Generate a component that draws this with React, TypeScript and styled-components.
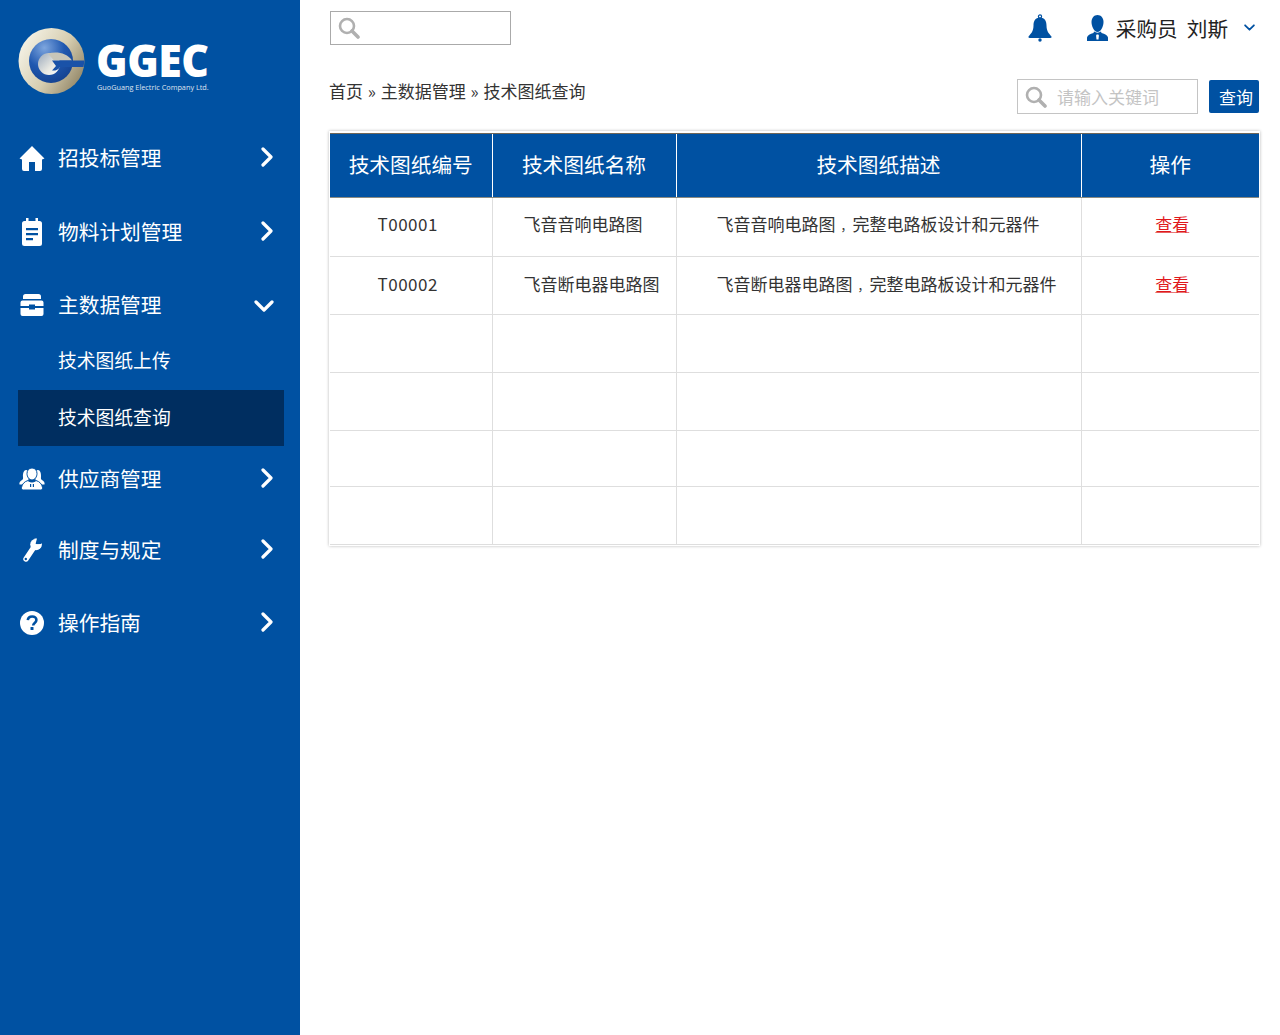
import * as React from 'react';
import styled, { createGlobalStyle } from 'styled-components';

const BLUE = '#0051a2';
const FONT = '"Noto Sans CJK SC", "Noto Sans", sans-serif';

const GlobalStyle = createGlobalStyle`
  html, body { margin: 0; padding: 0; background: #fff; }
  body { font-family: ${FONT}; color: #333; }
  * { box-sizing: border-box; }
`;

const Page = styled.div`
  display: flex;
  width: 1280px;
  height: 1035px;
  overflow: hidden;
`;

const Sidebar = styled.aside`
  width: 300px;
  flex: none;
  background: ${BLUE};
  padding: 27px 16px 0 18px;
`;

const LogoRow = styled.div`
  display: flex;
  height: 68px;
  gap: 11px;
  margin-bottom: 40px;
`;

const LogoWords = styled.div`
  color: #fff;
  padding-top: 16px;
`;

const LogoName = styled.div`
  font-family: "Open Sans", sans-serif;
  font-weight: 800;
  font-size: 45px;
  line-height: 34px;
  height: 34px;
  letter-spacing: -0.5px;
  transform-origin: left top;
  transform: scaleX(0.95);
`;

const LogoSub = styled.div`
  font-family: "Open Sans", sans-serif;
  font-size: 7.3px;
  line-height: 10px;
  margin-top: 5px;
  margin-left: 1px;
  white-space: nowrap;
  opacity: 0.85;
`;

const MenuItem = styled.div<{ $top: number }>`
  display: flex;
  align-items: center;
  height: 46px;
  margin-top: ${p => p.$top}px;
  padding-right: 7px;
  color: #fff;
  font-size: 20.7px;
`;

const MenuIcon = styled.span`
  display: flex;
  justify-content: center;
  width: 28px;
  margin-right: 12px;
`;

const MenuLabel = styled.span`
  flex: 1;
  margin-top: -3px;
  white-space: nowrap;
`;

const SubItem = styled.div<{ $active?: boolean; $top: number }>`
  display: flex;
  align-items: center;
  height: 56px;
  margin-top: ${p => p.$top}px;
  padding: 0 0 4px 40px;
  color: #fff;
  font-size: 18.8px;
  background: ${p => (p.$active ? '#002e60' : 'transparent')};
`;

const Main = styled.main`
  flex: 1;
  padding: 11px 20px 0 29px;
`;

const TopBar = styled.div`
  display: flex;
  align-items: flex-start;
  height: 68px;
`;

const SearchBox = styled.div<{ $width: number; $height: number; $border: string }>`
  display: flex;
  align-items: center;
  gap: 10px;
  width: ${p => p.$width}px;
  height: ${p => p.$height}px;
  margin-left: 1px;
  padding-left: 7px;
  border: 1px solid ${p => p.$border};
  color: #c4c4c4;
  font-size: 17px;
  white-space: nowrap;
`;

const UserArea = styled.div`
  display: flex;
  align-items: center;
  margin-left: auto;
  height: 33px;
  padding-right: 5px;
  color: ${BLUE};
`;

const BellSlot = styled.span`
  display: flex;
  margin-right: 35px;
`;

const UserName = styled.span`
  margin: 0 16px 0 8px;
  color: #222;
  font-size: 20.6px;
  white-space: pre;
`;

const Toolbar = styled.div`
  display: flex;
  align-items: flex-start;
  height: 52px;
`;

const Crumbs = styled.div`
  flex: 1;
  color: #333;
  font-size: 17px;
  line-height: 24px;
  word-spacing: 1px;
`;

const QueryButton = styled.button`
  width: 50px;
  height: 33px;
  margin: 1px 1px 0 11px;
  padding: 0 0 0 4px;
  border: none;
  border-radius: 2px;
  background: ${BLUE};
  color: #fff;
  font: 17px ${FONT};
`;

const TableCard = styled.div`
  width: 931px;
  padding: 2px 1px 1px 1px;
  box-shadow: 0 0 3px rgba(0, 0, 0, 0.28);
`;

const Table = styled.table`
  width: 929px;
  table-layout: fixed;
  border-collapse: collapse;
`;

const Head = styled.th`
  height: 64px;
  padding: 0 0 3px;
  background: ${BLUE};
  border-top: 1px solid #6f6658;
  border-bottom: 1px solid #8a8a80;
  border-left: 1px solid #fff;
  color: #fff;
  font-size: 20.7px;
  font-weight: 400;
  &:first-child { border-left: none; }
`;

const Cell = styled.td<{ $height: number; $lift: number }>`
  height: ${p => p.$height}px;
  padding: 0 0 ${p => p.$lift}px;
  border-bottom: 1px solid #dedede;
  border-left: 1px solid #dedede;
  color: #333;
  font-size: 17px;
  text-align: center;
  &:first-child { border-left: none; }
`;

const CodeText = styled.span`
  display: block;
  padding-right: 6px;
  letter-spacing: 0.5px;
`;

const DescText = styled.span`
  display: block;
  padding-left: 40px;
  text-align: left;
`;

const Comma = styled.span`
  margin-left: 5px;
  font-size: 12px;
`;

const NameText = styled.span`
  display: block;
  padding-left: 31px;
  text-align: left;
`;

const ViewLink = styled.a`
  margin-left: 4px;
  color: #e0181c;
  text-decoration: underline;
  text-decoration-color: #e87878;
`;

const ChevronSvg = styled.svg<{ $kind: 'right' | 'down' | 'small' }>`
  flex: none;
  margin-top: ${p => (p.$kind === 'right' ? '-2px' : p.$kind === 'down' ? '2px' : '0')};
  margin-right: ${p => (p.$kind === 'down' ? '3px' : '0')};
`;

const Chevron = ({ kind = 'right' }: { kind?: 'right' | 'down' | 'small' }) => {
  const size = kind === 'small' ? 11 : 20;
  return (
    <ChevronSvg $kind={kind} width={size} height={size} viewBox="0 0 20 20" fill="none" stroke="currentColor" strokeWidth="3.2" strokeLinecap="round" strokeLinejoin="round">
      {kind === 'right' ? <path d="M6 2l8 8-8 8" /> : <path d="M2 6l8 8 8-8" />}
    </ChevronSvg>
  );
};

const SearchIcon = () => (
  <svg width="22" height="22" viewBox="0 0 22 22" fill="none" stroke="#b0b0b0">
    <circle cx="9" cy="9" r="7" strokeWidth="2.6" />
    <path d="M14 14l6 6" strokeWidth="3.6" strokeLinecap="round" />
  </svg>
);

const HomeIcon = () => (
  <svg width="26" height="25" viewBox="0 0 26 25" fill="#fff">
    <path d="M13 0L25.500 12.500 23 13.500V23Q23 25 21 25H16V16H10V25H5Q3 25 3 23V13.500L.5 12.500z" />
  </svg>
);

const NoteIcon = () => (
  <svg width="24" height="28" viewBox="0 0 24 28" fill="#fff">
    <path fillRule="evenodd" d="M6 0h2.500v3h7V0H18v3h1.500A2.500 2.500 0 0 1 22 5.500V25.500A2.500 2.500 0 0 1 19.500 28h-15A2.500 2.500 0 0 1 2 25.500V5.500A2.500 2.500 0 0 1 4.500 3H6zM6 10v2.200h12V10zM6 15v2.200h12V15zM6 20v2.200h7V20z" />
  </svg>
);

const ToolboxIcon = () => (
  <svg width="24" height="24" viewBox="0 0 24 24" fill="#fff">
    <path d="M5.500 1h13A2.500 2.500 0 0 1 21 3.500V6H3V3.500A2.500 2.500 0 0 1 5.500 1z" />
    <path d="M2.500 7.500h19a2 2 0 0 1 2 2V13H15v-1.500H9V13H.5V9.500a2 2 0 0 1 2-2z" />
    <path d="M.5 15H9v1.500h6V15h8.500v6a2 2 0 0 1-2 2h-19a2 2 0 0 1-2-2z" />
  </svg>
);

const TeamIcon = () => (
  <svg width="26" height="22" viewBox="0 0 26 22" fill="#fff">
    <path d="M7 2c2 0 3 2 3 5s-1 6-1 6l-2 3.500H.5C0 15 1 13 3 12c1-.5 1.200-1.500 1-3C3.700 5 5 2 7 2z" />
    <path d="M19 2c-2 0-3 2-3 5s1 6 1 6l2 3.500h6.500c.5-1.500-.5-3.500-2.500-4.500-1-.5-1.200-1.500-1-3 .3-4-1-7-3-7z" />
    <path d="M13 0c3 0 5 2.300 5 5.500S16 12 13 12 8 8.700 8 5.500 10 0 13 0z" stroke={BLUE} strokeWidth="1" />
    <path d="M9 12.500c1 1 2.500 1.500 4 1.500s3-.5 4-1.500c3.500 1 6 3.500 6.500 7 .2 1.500-.5 2.500-2 2.500h-17c-1.500 0-2.200-1-2-2.500.5-3.500 3-6 6.500-7z" stroke={BLUE} strokeWidth="1" />
    <path d="M11 16h1.200v3H11zM13.800 16H15v3h-1.200z" fill={BLUE} />
  </svg>
);

const WrenchIcon = () => (
  <svg width="20" height="25" viewBox="0 0 20 25" fill="#fff">
    <path d="M4 21L12 9" stroke="#fff" strokeWidth="5.400" strokeLinecap="round" />
    <circle cx="14" cy="6.500" r="5.800" />
    <path d="M13.500 6.800L12.500 -1H22V5.500z" fill={BLUE} />
    <path d="M12.500 .6L15 .4 13.500 6 18.500 6.500 19.700 5 19 9.500 12 9z" />
    <circle cx="3.800" cy="21" r="1.200" fill={BLUE} />
  </svg>
);

const HelpIcon = () => (
  <svg width="24" height="24" viewBox="0 0 24 24">
    <circle cx="12" cy="12" r="12" fill="#fff" />
    <path d="M7.800 9.200C8 6.800 9.800 5.500 12.200 5.500c2.500 0 4.200 1.500 4.200 3.500 0 3-3.200 3-3.200 5.500" fill="none" stroke={BLUE} strokeWidth="2.600" />
    <rect x="10.500" y="16" width="3" height="3" rx=".5" fill={BLUE} />
  </svg>
);

const BellIcon = () => (
  <svg width="24" height="28" viewBox="0 0 24 28" fill={BLUE}>
    <circle cx="12" cy="2.500" r="1.600" fill="none" stroke={BLUE} strokeWidth="1.200" />
    <path d="M12 3.500C7 3.500 5.500 7.500 5.500 11.500 5.500 17.500 3 19.500.5 22.500Q0 24 2 24H22Q24 24 23.500 22.500C21 19.500 18.500 17.500 18.500 11.500 18.500 7.500 17 3.500 12 3.500z" />
    <circle cx="12" cy="26" r="1.700" />
  </svg>
);

const UserTieIcon = () => (
  <svg width="21" height="26" viewBox="0 0 21 26" fill={BLUE}>
    <path d="M10.500 0C14 0 16.500 2.800 16.500 7S14 17 10.500 17 4.500 11.200 4.500 7 7 0 10.500 0z" />
    <path d="M7 16.500c2 1.500 5 1.500 7 0l.5 1.500c3.500 1 6 2 6.500 4.500V26H0v-3.500C.5 20 3 19 6.500 18z" />
    <path d="M9.600 19.500h1.800l.5 1-.4 4h-2l-.4-4z" fill="#fff" />
  </svg>
);

const LogoMark = () => (
  <svg width="67" height="68" viewBox="0 0 67 68">
    <defs>
      <linearGradient id="ring" x1="0" y1="0.2" x2="1" y2="0.8">
        <stop offset="0" stopColor="#f7f5ea" />
        <stop offset="0.55" stopColor="#d6cdb0" />
        <stop offset="1" stopColor="#8e8263" />
      </linearGradient>
      <radialGradient id="core" cx="0.35" cy="0.2" r="0.9">
        <stop offset="0" stopColor="#7ea6de" />
        <stop offset="0.5" stopColor="#2058b0" />
        <stop offset="1" stopColor="#123f8c" />
      </radialGradient>
      <linearGradient id="hole" x1="0" y1="0" x2="1" y2="1">
        <stop offset="0" stopColor="#9aa9bc" />
        <stop offset="0.6" stopColor="#e8e8e2" />
        <stop offset="1" stopColor="#ffffff" />
      </linearGradient>
    </defs>
    <circle cx="33.500" cy="34" r="33" fill="url(#ring)" />
    <circle cx="33" cy="34" r="22" fill="url(#core)" />
    <circle cx="31" cy="37" r="11" fill="url(#hole)" />
    <path d="M30 26.500C38 24 49 25.500 54 33.500H36z" fill="#c9c6b8" />
    <path d="M34 33.500H66.500L65.500 40H42C40 43 37 44 34 43.500L38 39z" fill="#1a52a8" />
  </svg>
);

const menuA = [
  { label: '招投标管理', icon: <HomeIcon />, top: 0 },
  { label: '物料计划管理', icon: <NoteIcon />, top: 28 },
];

const menuB = [
  { label: '供应商管理', icon: <TeamIcon />, top: 10 },
  { label: '制度与规定', icon: <WrenchIcon />, top: 25 },
  { label: '操作指南', icon: <HelpIcon />, top: 27 },
];

const rows = [
  { code: 'T00001', name: '飞音音响电路图', height: 59, lift: 8 },
  { code: 'T00002', name: '飞音断电器电路图', height: 58, lift: 5 },
  { height: 58, lift: 0 },
  { height: 58, lift: 0 },
  { height: 56, lift: 0 },
  { height: 58, lift: 0 },
];

export default function App() {
  return (
    <Page>
      <GlobalStyle />
      <Sidebar>
        <LogoRow>
          <LogoMark />
          <LogoWords>
            <LogoName>GGEC</LogoName>
            <LogoSub>GuoGuang Electric Company Ltd.</LogoSub>
          </LogoWords>
        </LogoRow>
        {menuA.map(m => (
          <MenuItem key={m.label} $top={m.top}>
            <MenuIcon>{m.icon}</MenuIcon>
            <MenuLabel>{m.label}</MenuLabel>
            <Chevron />
          </MenuItem>
        ))}
        <MenuItem $top={27}>
          <MenuIcon><ToolboxIcon /></MenuIcon>
          <MenuLabel>主数据管理</MenuLabel>
          <Chevron kind="down" />
        </MenuItem>
        <SubItem $top={5}>技术图纸上传</SubItem>
        <SubItem $top={1} $active>技术图纸查询</SubItem>
        {menuB.map(m => (
          <MenuItem key={m.label} $top={m.top}>
            <MenuIcon>{m.icon}</MenuIcon>
            <MenuLabel>{m.label}</MenuLabel>
            <Chevron />
          </MenuItem>
        ))}
      </Sidebar>
      <Main>
        <TopBar>
          <SearchBox $width={181} $height={34} $border="#aaaaaa">
            <SearchIcon />
          </SearchBox>
          <UserArea>
            <BellSlot><BellIcon /></BellSlot>
            <UserTieIcon />
            <UserName>采购员  刘斯</UserName>
            <Chevron kind="small" />
          </UserArea>
        </TopBar>
        <Toolbar>
          <Crumbs>首页 » 主数据管理 » 技术图纸查询</Crumbs>
          <SearchBox $width={181} $height={35} $border="#c4c4c4">
            <SearchIcon />
            请输入关键词
          </SearchBox>
          <QueryButton>查询</QueryButton>
        </Toolbar>
        <TableCard>
          <Table>
            <colgroup>
              <col style={{ width: 162 }} />
              <col style={{ width: 184 }} />
              <col style={{ width: 405 }} />
              <col style={{ width: 178 }} />
            </colgroup>
            <thead>
              <tr>
                <Head>技术图纸编号</Head>
                <Head>技术图纸名称</Head>
                <Head>技术图纸描述</Head>
                <Head>操作</Head>
              </tr>
            </thead>
            <tbody>
              {rows.map((r, i) => (
                <tr key={i}>
                  <Cell $height={r.height} $lift={r.lift}>{r.code && <CodeText>{r.code}</CodeText>}</Cell>
                  <Cell $height={r.height} $lift={r.lift}>{r.name && <NameText>{r.name}</NameText>}</Cell>
                  <Cell $height={r.height} $lift={r.lift}>
                    {r.name && <DescText>{r.name}<Comma>，</Comma>完整电路板设计和元器件</DescText>}
                  </Cell>
                  <Cell $height={r.height} $lift={r.lift}>{r.code && <ViewLink href="#">查看</ViewLink>}</Cell>
                </tr>
              ))}
            </tbody>
          </Table>
        </TableCard>
      </Main>
    </Page>
  );
}
